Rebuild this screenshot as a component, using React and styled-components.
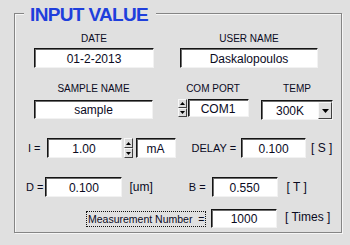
import * as React from "react";
import styled, { createGlobalStyle } from "styled-components";

const Global = createGlobalStyle`
  body {
    margin: 0;
    background: #e0e0e0;
    font-family: "Liberation Sans", Arial, sans-serif;
    color: #0a0a1e;
  }
`;

const Page = styled.div`
  width: 350px;
  height: 245px;
  padding: 13px 0 0 14px;
  box-sizing: border-box;
`;

const Panel = styled.div`
  position: relative;
  width: 328px;
  height: 220px;
  box-sizing: border-box;
  border: 1px solid #858585;
  box-shadow: inset 1px 1px 0 #f6f6f6, 1px 1px 0 #f6f6f6;
  padding-top: 19px;
`;

const Title = styled.div`
  position: absolute;
  top: -9px;
  left: 9px;
  padding: 0 8px 0 6px;
  background: #e0e0e0;
  color: #1f3fdc;
  font-size: 19px;
  line-height: 19px;
  font-weight: bold;
  letter-spacing: -0.65px;
`;

const Row = styled.div`
  display: flex;
  align-items: ${(p) => p.$align || "center"};
  margin-top: ${(p) => p.$top || 0}px;
`;

const Group = styled.div`
  display: flex;
  flex-direction: column;
  align-items: center;
  width: ${(p) => p.$w}px;
  margin-left: ${(p) => p.$ml}px;
`;

const Label = styled.div`
  font-size: 10px;
  line-height: 12px;
  height: 12px;
  white-space: nowrap;
  margin-bottom: ${(p) => p.$gap}px;
`;

const Caption = styled.span`
  font-size: ${(p) => p.$size || 11}px;
  line-height: 14px;
  white-space: pre;
  margin-left: ${(p) => p.$ml}px;
  margin-top: ${(p) => p.$dy || 0}px;
`;

const Box = styled.div`
  box-sizing: border-box;
  width: ${(p) => p.$w}px;
  height: ${(p) => p.$h || 20}px;
  margin-left: ${(p) => p.$ml || 0}px;
  background: #fff;
  border: 1px solid;
  border-color: #141414 #f2f2f2 #f2f2f2 #141414;
  box-shadow: inset 1px 1px 0 #6c6c6c;
  font-size: 12px;
  display: flex;
  align-items: center;
  justify-content: center;
  padding-top: 1px;
  white-space: nowrap;
`;

const Spin = styled.div`
  display: flex;
  flex-direction: column;
  width: ${(p) => p.$w || 9}px;
  height: ${(p) => p.$h || 20}px;
  margin-left: ${(p) => p.$ml || 0}px;
`;

const SpinHalf = styled.div`
  flex: 1;
  box-sizing: border-box;
  background: #dcdcdc;
  border: 1px solid;
  border-color: #f8f8f8 #404040 #404040 #f8f8f8;
  display: flex;
  align-items: center;
  justify-content: center;
`;

const Select = styled.div`
  box-sizing: border-box;
  display: flex;
  width: 72px;
  height: 20px;
  background: #fff;
  border: 1px solid;
  border-color: #141414 #f2f2f2 #f2f2f2 #141414;
  box-shadow: inset 1px 1px 0 #6c6c6c;
  font-size: 12px;
`;

const SelectText = styled.div`
  flex: 1;
  display: flex;
  align-items: center;
  justify-content: center;
  padding-top: 1px;
`;

const SelectBtn = styled.div`
  width: 14px;
  box-sizing: border-box;
  margin: 1px 0 0 0;
  background: #dedede;
  border: 1px solid;
  border-color: #f8f8f8 #404040 #404040 #f8f8f8;
  display: flex;
  align-items: center;
  justify-content: center;
`;

const MeasureBtn = styled.div`
  box-sizing: border-box;
  width: 120px;
  height: 16px;
  margin-left: ${(p) => p.$ml}px;
  border: 1px dotted #111;
  font-size: 10.5px;
  line-height: 14px;
  white-space: pre;
  padding-left: 1px;
`;

function Arrow({ up, w = 5 }) {
  const h = Math.ceil(w / 2);
  return (
    <svg width={w} height={h} viewBox={`0 0 ${w} ${h}`}>
      <polygon
        points={up ? `0,${h} ${w},${h} ${w / 2},0` : `0,0 ${w},0 ${w / 2},${h}`}
        fill="#000"
      />
    </svg>
  );
}

function Spinner({ ml, h }) {
  return (
    <Spin $ml={ml} $h={h}>
      <SpinHalf>
        <Arrow up />
      </SpinHalf>
      <SpinHalf>
        <Arrow />
      </SpinHalf>
    </Spin>
  );
}

export default function App() {
  return (
    <Page>
      <Global />
      <Panel>
        <Title>INPUT VALUE</Title>

        <Row $align="flex-start">
          <Group $w={120} $ml={19}>
            <Label $gap={3}>DATE</Label>
            <Box $w={120}>01-2-2013</Box>
          </Group>
          <Group $w={138} $ml={26}>
            <Label $gap={3}>USER NAME</Label>
            <Box $w={138}>Daskalopoulos</Box>
          </Group>
        </Row>

        <Row $align="flex-start" $top={15}>
          <Group $w={119} $ml={19}>
            <Label $gap={5}>SAMPLE NAME</Label>
            <Box $w={119} $h={19}>sample</Box>
          </Group>
          <Group $w={70} $ml={25}>
            <Label $gap={4}>COM PORT</Label>
            <Row>
              <Spinner h={18} />
              <Box $w={61} $h={18} $ml={1}>COM1</Box>
            </Row>
          </Group>
          <Group $w={72} $ml={13}>
            <Label $gap={5}>TEMP</Label>
            <Select>
              <SelectText>300K</SelectText>
              <SelectBtn>
                <Arrow w={7} />
              </SelectBtn>
            </Select>
          </Group>
        </Row>

        <Row $top={18}>
          <Caption $ml={13}>I =</Caption>
          <Box $w={75} $ml={6}>1.00</Box>
          <Spinner ml={2} />
          <Box $w={40} $ml={3}>mA</Box>
          <Caption $ml={16}>DELAY =</Caption>
          <Box $w={65} $ml={5}>0.100</Box>
          <Caption $size={12} $ml={5}>[ S ]</Caption>
        </Row>

        <Row $top={19}>
          <Caption $ml={11}>D =</Caption>
          <Box $w={77} $ml={2}>0.100</Box>
          <Caption $size={12} $ml={7}>[um]</Caption>
          <Caption $ml={36}>B =</Caption>
          <Box $w={66} $ml={6}>0.550</Box>
          <Caption $size={12} $ml={9}>[ T ]</Caption>
        </Row>

        <Row $top={12}>
          <MeasureBtn $ml={71}>Measurement Number  =</MeasureBtn>
          <Box $w={66} $h={19} $ml={5}>1000</Box>
          <Caption $size={12} $ml={8} $dy={-3}>[ Times ]</Caption>
        </Row>
      </Panel>
    </Page>
  );
}
